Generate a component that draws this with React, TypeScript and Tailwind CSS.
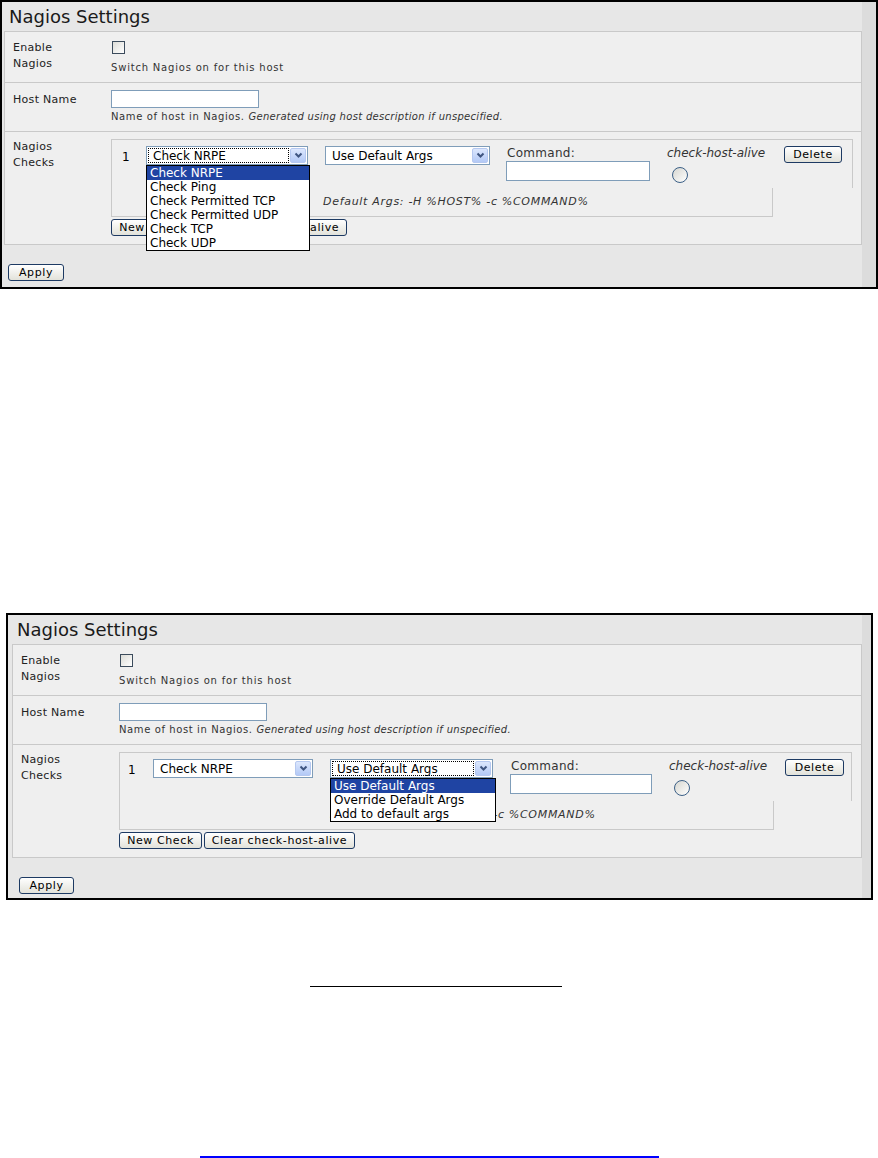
import React from "react";

const ff = "font-['DejaVu_Sans',Verdana,sans-serif]";

function Chevron() {
  return (
    <svg width="9" height="7" viewBox="0 0 9 7">
      <path d="M1.5 1.5 L4.5 4.5 L7.5 1.5" fill="none" stroke="#3f5580" strokeWidth="2" />
    </svg>
  );
}

function Select({
  label,
  className,
  focused,
  children,
}: {
  label: string;
  className: string;
  focused?: boolean;
  children?: React.ReactNode;
}) {
  return (
    <div className={`relative flex h-[19px] items-center border border-[#7f9db9] bg-white ${className}`}>
      <div className="flex h-full flex-1 items-center p-[1px]">
        <div
          className={`flex h-full w-full items-center pl-[4px] text-[12px] text-black ${
            focused ? "border border-dotted border-black" : "border border-transparent"
          }`}
        >
          {label}
        </div>
      </div>
      <div className="mr-[1px] flex h-[15px] w-[16px] items-center justify-center rounded-[2px] border border-[#b5c8f0] bg-gradient-to-b from-[#dce7fd] to-[#b3c9f6]">
        <Chevron />
      </div>
      {children}
    </div>
  );
}

function DropList({ items, className }: { items: string[]; className: string }) {
  return (
    <div className={`absolute top-full z-10 mt-[1px] border border-black bg-white ${className}`}>
      {items.map((it, i) => (
        <div
          key={it}
          className={`h-[14px] pl-[3px] text-[12px] leading-[14px] whitespace-nowrap ${
            i === 0 ? "bg-[#1f44a3] text-white" : "text-black"
          }`}
        >
          {it}
        </div>
      ))}
    </div>
  );
}

function Btn({ label, className = "" }: { label: string; className?: string }) {
  return (
    <button
      className={`flex h-[17px] items-center justify-center whitespace-nowrap rounded-[3px] border border-[#1d3a63] bg-gradient-to-b from-white to-[#e2e2da] text-[11px] leading-none tracking-[0.6px] text-black ${className}`}
    >
      {label}
    </button>
  );
}

function Panel({ alt }: { alt?: boolean }) {
  return (
    <div
      className={`flex border-2 border-black bg-[#dcdcdc] ${
        alt ? "ml-[6px] h-[287px] w-[867px]" : "h-[289px] w-[878px]"
      }`}
    >
      <div className="flex flex-col bg-[#e7e7e7]">
        {/* title */}
        <div className={`flex h-[29px] items-center text-[18px] text-[#1a1a1a] ${alt ? "pl-[9px]" : "pl-[7px]"}`}>
          Nagios Settings
        </div>

        {/* form box */}
        <div
          className={`border border-[#c9c9c9] bg-[#efefef] ${
            alt ? "ml-[4px] w-[850px]" : "ml-[2px] w-[858px]"
          }`}
        >
          {/* enable row */}
          <div className="flex h-[51px] border-b border-[#c9c9c9]">
            <div className="w-[106px] pl-[8px] pt-[8px] text-[11px] leading-[16px] tracking-[0.3px] text-[#222]">
              Enable
              <br />
              Nagios
            </div>
            <div className="flex flex-col">
              <div className="ml-[1px] mt-[9px] h-[13px] w-[13px] border border-[#3b4b5c] bg-gradient-to-br from-[#dcdcd7] to-white" />
              <div className="mt-[8px] text-[10px] leading-[12px] tracking-[0.8px] text-[#333]">
                Switch Nagios on for this host
              </div>
            </div>
          </div>

          {/* host name row */}
          <div className="flex h-[49px] border-b border-[#c9c9c9]">
            <div className="w-[106px] pl-[8px] pt-[9px] text-[11px] leading-[16px] tracking-[0.3px] text-[#222]">
              Host Name
            </div>
            <div className="flex flex-col">
              <div className="mt-[7px] h-[18px] w-[148px] border border-[#7f9db9] bg-white" />
              <div className="mt-[3px] text-[10px] leading-[12px] tracking-[0.6px] text-[#333]">
                Name of host in Nagios.{" "}
                <i className="tracking-[0.3px]">Generated using host description if unspecified.</i>
              </div>
            </div>
          </div>

          {/* checks row */}
          <div className="flex h-[112px]">
            <div className="w-[106px] pl-[8px] pt-[7px] text-[11px] leading-[16px] tracking-[0.3px] text-[#222]">
              Nagios
              <br />
              Checks
            </div>
            <div className="flex flex-col pt-[7px]">
              <div className={alt ? "w-[733px]" : "w-[742px]"}>
                <div className="flex h-[49px] items-start border-l border-r border-t border-[#c9c9c9] pt-[6px] text-[12px]">
                  <div className={`pt-[2px] text-black ${alt ? "w-[33px] pl-[8px]" : "w-[34px] pl-[10px]"}`}>1</div>
                  <Select label="Check NRPE" focused={!alt} className={alt ? "w-[160px]" : "w-[162px]"}>
                    {!alt && (
                      <DropList
                        className="-left-[1px] w-[164px]"
                        items={[
                          "Check NRPE",
                          "Check Ping",
                          "Check Permitted TCP",
                          "Check Permitted UDP",
                          "Check TCP",
                          "Check UDP",
                        ]}
                      />
                    )}
                  </Select>
                  <Select
                    label="Use Default Args"
                    focused={alt}
                    className={alt ? "ml-[17px] w-[163px]" : "ml-[17px] w-[165px]"}
                  >
                    {alt && (
                      <DropList
                        className="-left-[1px] w-[166px]"
                        items={["Use Default Args", "Override Default Args", "Add to default args"]}
                      />
                    )}
                  </Select>
                  <div className={alt ? "ml-[17px] w-[142px]" : "ml-[16px] w-[144px]"}>
                    <div className="pl-[1px] text-[12px] leading-[15px] tracking-[0.3px] text-[#333]">Command:</div>
                    <div className="h-[20px] w-full border border-[#7f9db9] bg-white" />
                  </div>
                  <div className={alt ? "ml-[17px] w-[116px]" : "ml-[17px] w-[117px]"}>
                    <div className="text-[12px] leading-[15px] italic text-[#333]">check-host-alive</div>
                    <div className="ml-[5px] mt-[6px] h-[16px] w-[16px] rounded-full border-[1.5px] border-[#3b5f86] bg-gradient-to-br from-[#d6d6d0] to-white" />
                  </div>
                  <Btn label="Delete" className={alt ? "w-[59px]" : "w-[58px]"} />
                </div>
                <div
                  className={`flex h-[29px] items-center whitespace-nowrap border-b border-l border-r border-[#c9c9c9] text-[11px] italic tracking-[0.7px] text-[#333] ${
                    alt ? "w-[655px] pl-[210px]" : "w-[662px] pl-[211px]"
                  }`}
                >
                  Default Args: -H %HOST% -c %COMMAND%
                </div>
              </div>
              <div className="mt-[2px] flex gap-[2px]">
                <Btn label="New Check" className="w-[83px]" />
                <Btn label="Clear check-host-alive" className="w-[151px]" />
              </div>
            </div>
          </div>
        </div>

        {/* apply area */}
        <div className={`pt-[19px] ${alt ? "pl-[11px]" : "pl-[6px]"}`}>
          <Btn label="Apply" className={alt ? "w-[55px]" : "w-[56px]"} />
        </div>
      </div>
      <div className="flex-1" />
    </div>
  );
}

export default function App() {
  return (
    <div className={`h-[1158px] w-[878px] overflow-hidden bg-white ${ff}`}>
      <Panel />
      <div className="h-[324px]" />
      <Panel alt />
      <div className="h-[86px]" />
      <div className="ml-[310px] h-[1px] w-[252px] bg-black" />
      <div className="h-[169px]" />
      <div className="ml-[200px] h-[2px] w-[459px] bg-[#0000ff]" />
    </div>
  );
}
